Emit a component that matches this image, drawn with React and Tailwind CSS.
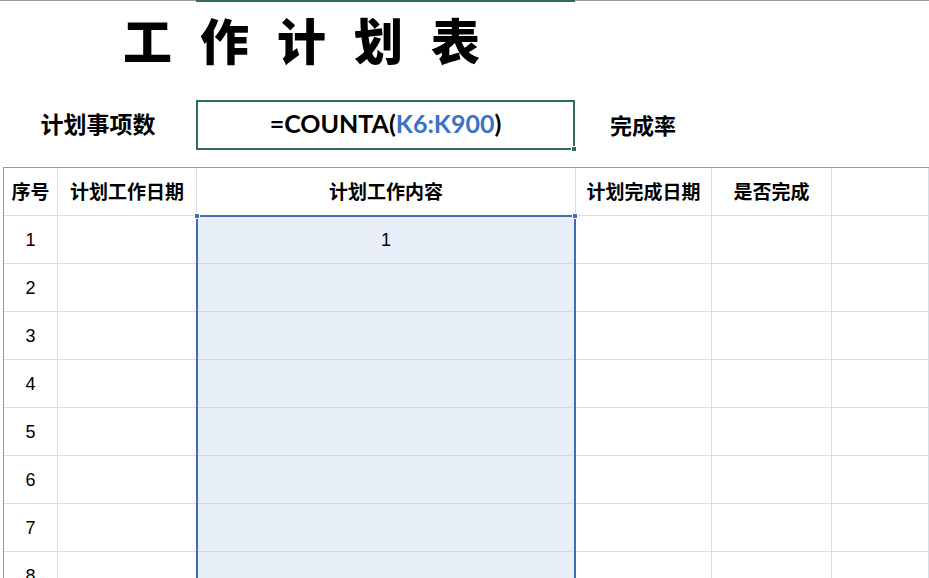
import React from "react";

const cjk = { fontFamily: '"Noto Sans CJK SC", "Noto Sans", sans-serif' };
const num = { fontFamily: '"Liberation Sans", "Noto Sans CJK SC", sans-serif' };

const headers = ["序号", "计划工作日期", "计划工作内容", "计划完成日期", "是否完成", ""];
const rows = [1, 2, 3, 4, 5, 6, 7, 8];

export default function App() {
  return (
    <div className="w-[929px] h-[578px] overflow-hidden bg-white relative" style={cjk}>
      {/* top edge */}
      <div className="flex h-[2px]">
        <div className="w-[196px] h-[1px] bg-[#9c9c9c]" />
        <div className="w-[379px] h-[2px] bg-[#2f6f50]" />
        <div className="flex-1 h-[1px] bg-[#9c9c9c]" />
      </div>

      {/* title */}
      <div className="h-[98px] flex items-start pl-[123px] pt-[6px]">
        <div className="text-[49px] font-black leading-[62px] tracking-[28px] text-black">工作计划表</div>
      </div>

      {/* summary row */}
      <div className="flex h-[50px] items-center">
        <div className="w-[196px] flex justify-center pb-[3px] text-[23px] font-bold text-black">计划事项数</div>
        <div className="relative w-[379px] h-[50px] border-2 border-[#2f6f50] flex items-center justify-center pb-[3px]">
          <span className="text-[25px] font-bold text-black" style={{ fontFamily: '"Lato", "Liberation Sans", sans-serif' }}>
            =COUNTA(<span className="text-[#3b72c4]">K6:K900</span>)
          </span>
          <div className="absolute right-[-4px] bottom-[-4px] w-[6px] h-[6px] bg-[#2f6f50] border border-white" />
        </div>
        <div className="w-[136px] flex justify-center pb-[2px] text-[22px] font-bold text-black">完成率</div>
      </div>

      {/* table */}
      <div className="relative mt-[17px] ml-[3px] border-l border-t border-[#9c9c9c]">
        <div className="grid grid-cols-[54px_139px_379px_136px_120px_1fr]">
          {headers.map((h, i) => (
            <div
              key={"h" + i}
              className="h-[48px] border-r border-b border-[#d3e1e6] flex items-center justify-center text-[19px] font-bold text-black"
            >
              {h}
            </div>
          ))}
          {rows.map((r) =>
            [0, 1, 2, 3, 4, 5].map((c) => (
              <div
                key={r + "-" + c}
                className={
                  "h-[48px] border-r border-b flex items-center justify-center text-[18px] text-black pt-[2px] " +
                  (c === 2 ? "bg-[#e9eff9] border-[#cfdbe6]" : "border-[#d3e1e6]")
                }
                style={num}
              >
                {c === 0 ? r : c === 2 && r === 1 ? "1" : ""}
              </div>
            ))
          )}
        </div>
        {/* selection overlay */}
        <div className="absolute left-[192px] top-[47px] w-[380px] h-[420px] border-2 border-b-0 border-[#3d6db5] pointer-events-none">
          <div className="absolute left-[-4px] top-[-4px] w-[6px] h-[6px] bg-[#3d6db5] border border-white" />
          <div className="absolute right-[-4px] top-[-4px] w-[6px] h-[6px] bg-[#3d6db5] border border-white" />
        </div>
      </div>
    </div>
  );
}
